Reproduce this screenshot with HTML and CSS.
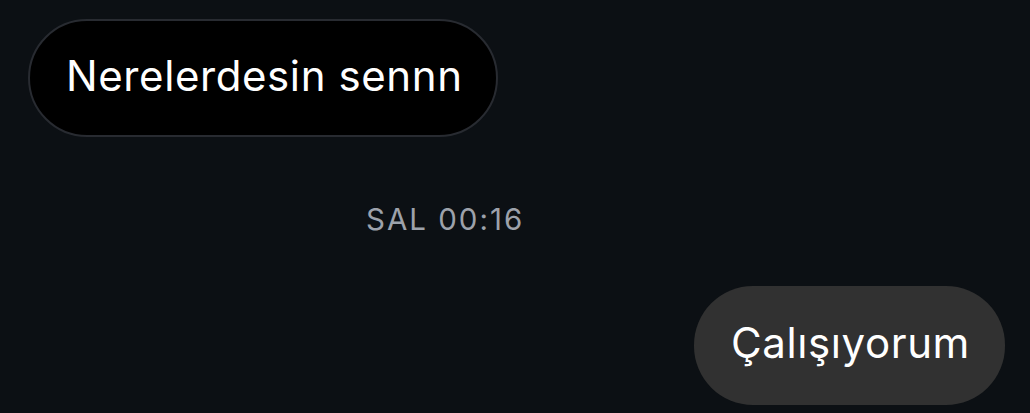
FILE: index.html
```html
<!DOCTYPE html>
<html lang="tr">
<head>
<meta charset="utf-8">
<link rel="stylesheet" href="styles.css">
</head>
<body>
<div class="chat">
  <div class="row row-in">
    <div class="bubble bubble-in">Nerelerdesin sennn</div>
  </div>
  <div class="stamp">SAL 00:16</div>
  <div class="row row-out">
    <div class="bubble bubble-out">Çalışıyorum</div>
  </div>
</div>
</body>
</html>
```

FILE: styles.css
```css
html, body {
  margin: 0;
  padding: 0;
  background: #0c1014;
  width: 1030px;
  height: 413px;
  overflow: hidden;
}
.chat {
  display: flex;
  flex-direction: column;
  padding: 19px 25px 0 28px;
  font-family: Inter, "Noto Sans", sans-serif;
  color: #fff;
}
.row {
  display: flex;
}
.row-out {
  justify-content: flex-end;
}
.bubble {
  height: 118px;
  box-sizing: border-box;
  display: flex;
  align-items: center;
  font-size: 42px;
  border-radius: 59px;
  letter-spacing: 0.6px;
  padding-bottom: 6px;
}
.bubble-in {
  background: #000;
  border: 2px solid #282b31;
  padding-left: 36px;
  width: 470px;
}
.bubble-out {
  background: #313131;
  padding-left: 37px;
  width: 311px;
  height: 119px;
}
.stamp {
  margin: 64px 0 0 338px;
  font-size: 29.5px;
  color: #9da2ab;
  height: 85px;
  letter-spacing: 2px;
}
```
